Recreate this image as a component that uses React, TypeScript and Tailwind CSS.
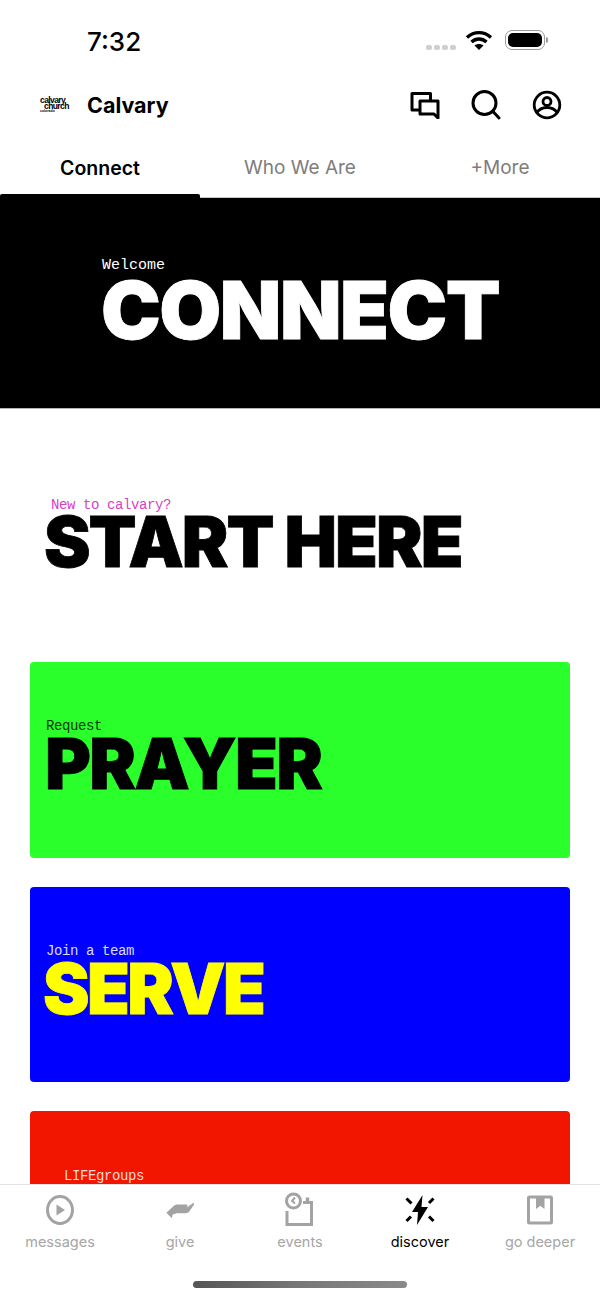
import React from "react";

const mono = "font-['Liberation_Mono','DejaVu_Sans_Mono',monospace]";
const display = "font-['Inter','Liberation_Sans',sans-serif] font-black [-webkit-text-stroke:0.8px_currentColor]";

function Card({ color, label, labelColor, title, titleColor, tracking, pt, pl = "pl-4", titlePl = "" }: { color: string; label: string; labelColor: string; title?: string; titleColor?: string; tracking?: string; pt: string; pl?: string; titlePl?: string }) {
  return (
    <div className={`${color} ${pt} ${pl} h-[195.5px] shrink-0 rounded-[4px]`}>
      <div className={`${mono} ${labelColor} text-[14px] tracking-[-0.4px] leading-[16px]`}>{label}</div>
      {title && <div className={`${display} ${titleColor} ${tracking} ${titlePl} text-[70px] leading-[56px] mt-[2px]`}>{title}</div>}
    </div>
  );
}

function NavItem({ label, active, children }: { label: string; active?: boolean; children: React.ReactNode }) {
  return (
    <div className="flex flex-col items-center">
      <div className="h-[36px] w-[40px] flex items-center justify-center">{children}</div>
      <div className={`mt-[5px] text-[14.5px] leading-[18px] ${active ? "text-black" : "text-[#a6a6a6]"}`}>{label}</div>
    </div>
  );
}

export default function App() {
  return (
    <div className="w-[600px] h-[1300px] bg-white flex flex-col overflow-hidden font-['Inter','Liberation_Sans',sans-serif]">
      {/* status bar */}
      <div className="h-[75px] shrink-0 flex items-start justify-between pl-[87px] pr-[52px] pt-[26px]">
        <div className="text-[26px] leading-[32px] font-medium text-black">7:32</div>
        <div className="flex items-center gap-[9px] pt-[2px]">
          <div className="flex gap-[2px] mt-[15px]">
            <span className="w-[6px] h-[5px] rounded-[2px] bg-[#cfcfcf]" />
            <span className="w-[6px] h-[5px] rounded-[2px] bg-[#cfcfcf]" />
            <span className="w-[6px] h-[5px] rounded-[2px] bg-[#cfcfcf]" />
            <span className="w-[6px] h-[5px] rounded-[2px] bg-[#cfcfcf]" />
          </div>
          <svg width="28" height="22" viewBox="0 0 28 22" fill="none" stroke="#000" strokeWidth="3.4" strokeLinecap="butt" className="mt-[1px]">
            <path d="M2 8.500C9 2 19 2 26 8.500" />
            <path d="M6.500 13C11 9 17 9 21.500 13" />
            <path d="M14 21l-4.500-4.600c2.500-2 6.500-2 9 0z" fill="#000" stroke="none" />
          </svg>
          <div className="flex items-center gap-[1px] ml-[3px]">
            <div className="w-[40px] h-[20px] rounded-[7px] border border-[#9a9a9a] p-[2px]">
              <div className="w-full h-full rounded-[5px] bg-black" />
            </div>
            <div className="w-[2px] h-[6px] rounded-r-full bg-[#9a9a9a]" />
          </div>
        </div>
      </div>

      {/* header */}
      <div className="h-[60px] shrink-0 flex items-center justify-between pl-[40px] pr-[38px]">
        <div className="flex items-center">
          <div className="w-[47px] text-black font-['Liberation_Sans',sans-serif] font-bold text-[8.5px] leading-[6px] tracking-[-0.6px] mt-[1px]">
            <div>calvary</div>
            <div className="pl-[4px]">church</div>
            <div className="text-[3.5px] leading-[5px] tracking-[0px]">colorado</div>
          </div>
          <div className="text-[21.5px] leading-[28px] font-bold text-black">Calvary</div>
        </div>
        <div className="flex items-center gap-[31px]">
          <svg width="30" height="28" viewBox="0 0 30 28" fill="none" stroke="#000" strokeWidth="3" strokeLinejoin="round">
            <path d="M10 19H2V2.500h18.500V10" />
            <path d="M10 10h18v17l-4-4H10z" />
          </svg>
          <svg width="30" height="30" viewBox="0 0 30 30" fill="none" stroke="#000" strokeWidth="3">
            <circle cx="13.500" cy="13" r="11.500" />
            <path d="M22 21.500l6 6.500" strokeLinecap="round" />
          </svg>
          <svg width="30" height="30" viewBox="0 0 30 30" fill="none" stroke="#000" strokeWidth="2.800">
            <circle cx="15" cy="15" r="12.800" />
            <circle cx="15" cy="11.500" r="4" />
            <path d="M4.500 23c3-4.600 6.500-5.500 10.500-5.500S22.500 18.400 25.500 23" />
          </svg>
        </div>
      </div>

      {/* tabs */}
      <div className="h-[63px] shrink-0 grid grid-cols-3 border-b border-[#c4c4c4]">
        <div className="relative flex justify-center pt-[20px] text-[19.5px] leading-[26px] font-semibold text-black">
          Connect
          <div className="absolute left-0 bottom-[-1px] w-[200px] h-[4px] rounded-t-[2px] bg-black" />
        </div>
        <div className="flex justify-center pt-[20px] text-[19px] leading-[26px] text-[#7d7d7d]">Who We Are</div>
        <div className="flex justify-center pt-[20px] text-[19px] leading-[26px] text-[#7d7d7d]">+More</div>
      </div>

      {/* content */}
      <div className="flex-1 min-h-0 overflow-hidden">
        <div className="h-[211px] bg-black border-b border-[#b5b5b5] pl-[102px] pt-[59px]">
          <div className={`${mono} text-white text-[15px] leading-[18px]`}>Welcome</div>
          <div className={`${display} text-white text-[80px] leading-[62px] tracking-[-1.5px] mt-[4px] -ml-[1px]`}>CONNECT</div>
        </div>

        <div className="h-[253px] pl-[51px] pt-[87px]">
          <div className={`${mono} text-[#d63fc4] text-[14px] tracking-[-0.4px] leading-[18px]`}>New to calvary?</div>
          <div className={`${display} text-black text-[70px] leading-[54px] tracking-[-2px] mt-[1px] -ml-[7px] whitespace-nowrap`}>START HERE</div>
        </div>

        <div className="px-[30px] flex flex-col gap-[29px]">
          <Card color="bg-[#2bff2b]" label="Request" labelColor="text-[#0b3a0b]" title="PRAYER" titleColor="text-black" tracking="tracking-[-1.700px]" pt="pt-[56px]" titlePl="-ml-[1px]" />
          <Card color="bg-[#0000ff]" label="Join a team" labelColor="text-[#dcdcff]" title="SERVE" titleColor="text-[#ffff00]" tracking="tracking-[-2.600px]" pt="pt-[56px]" titlePl="-ml-[3px]" />
          <Card color="bg-[#f21500]" label="LIFEgroups" labelColor="text-[#ffd9d4]" pt="pt-[57px]" pl="pl-[34px]" />
        </div>
      </div>

      {/* bottom nav */}
      <div className="h-[116px] shrink-0 bg-white border-t border-[#e3e3e3] flex flex-col">
        <div className="grid grid-cols-5 pt-[7px]">
          <NavItem label="messages">
            <svg width="30" height="32" viewBox="0 0 30 32" fill="none" stroke="#a3a3a3" strokeWidth="3">
              <ellipse cx="15" cy="16" rx="12.500" ry="13.500" />
              <path d="M11.500 10.500l8.500 5.500-8.500 5.500z" fill="#a3a3a3" stroke="none" />
            </svg>
          </NavItem>
          <NavItem label="give">
            <svg width="30" height="20" viewBox="0 0 32 22" fill="#a3a3a3">
              <path d="M1 14L9 6.500c1.500-1.200 3-1.500 5-1.500h9c1.500 0 1.800 2.500 0 3.500l-5 1 6-1.500 6-4.500c1.300-.6 2 .8 1.200 2L26 13c-1 1-2 1.500-4 1.500H12.500L8 16l-1 4z" />
            </svg>
          </NavItem>
          <NavItem label="events">
            <svg width="32" height="36" viewBox="0 0 32 36" fill="none" stroke="#a3a3a3" strokeWidth="3">
              <circle cx="9.500" cy="9" r="7" />
              <path d="M11 5.500L8 9l3 2.500" strokeWidth="2" />
              <path d="M3 19v13.500h24.500V10.500H19" />
              <path d="M23.500 5.500v4" strokeWidth="3.500" />
            </svg>
          </NavItem>
          <NavItem label="discover" active>
            <svg width="30" height="32" viewBox="0 0 30 32" fill="#000">
              <path d="M17.500 1L7 18h6l-1 13 11-18h-6.500z" />
              <g stroke="#000" strokeWidth="3" strokeLinecap="butt">
                <path d="M1.500 4.500L6.500 9.500" />
                <path d="M28.500 4.500L24 9" />
                <path d="M1.500 27L6 22.500" />
                <path d="M28.500 27L24 22.500" />
              </g>
            </svg>
          </NavItem>
          <NavItem label="go deeper">
            <svg width="28" height="32" viewBox="0 0 28 32" fill="none" stroke="#a3a3a3" strokeWidth="3">
              <rect x="2.500" y="3" width="23" height="26" rx="1" />
              <path d="M10 3h8.500v12l-4.200-3.200L10 15z" fill="#a3a3a3" stroke="none" />
            </svg>
          </NavItem>
        </div>
        <div className="flex justify-center mt-[30px]">
          <div className="w-[214px] h-[7px] rounded-full bg-gradient-to-r from-[#555555] via-[#777777] to-[#8a8a8a]" />
        </div>
      </div>
    </div>
  );
}
